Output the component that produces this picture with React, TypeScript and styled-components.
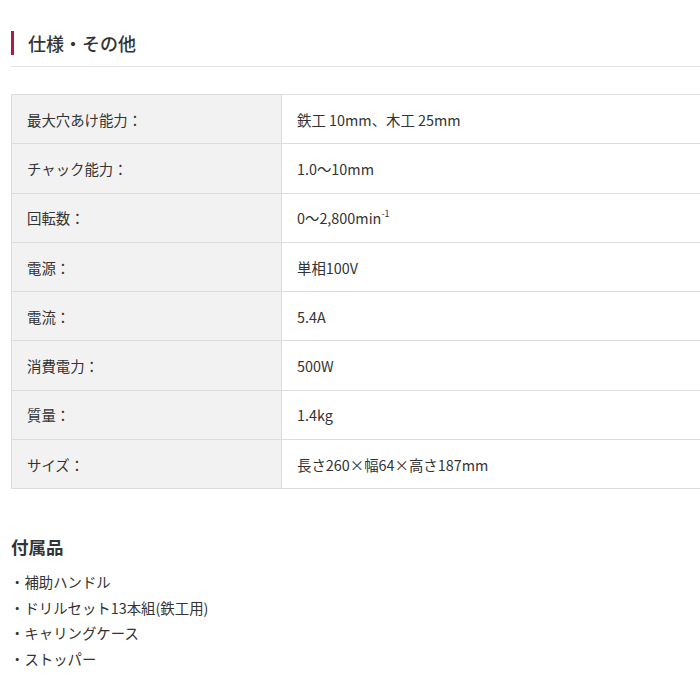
import styled, { createGlobalStyle } from "styled-components";

const GlobalStyle = createGlobalStyle`
  body {
    margin: 0;
    background: #fff;
    font-family: "Noto Sans CJK JP", "Noto Sans", sans-serif;
    color: #333;
  }
`;

const Page = styled.div`
  width: 700px;
  overflow: hidden;
  padding: 31px 0 0 11px;
  box-sizing: border-box;
`;

const SectionTitle = styled.h2`
  margin: 0;
  padding: 0 0 11px 0;
  border-bottom: 1px solid #e3e3e3;
  font-size: 18px;
  font-weight: 500;
  line-height: 24px;
  display: flex;
  align-items: center;
  gap: 14px;

  &::before {
    content: "";
    width: 3px;
    height: 24px;
    background: #b01a45;
  }
`;

const SpecTable = styled.table`
  margin-top: 27px;
  width: 720px;
  border-collapse: collapse;
  font-size: 14.4px;
`;

const Row = styled.tr``;

const Label = styled.th`
  width: 239px;
  background: #f2f2f2;
  border: 1px solid #dcdcdc;
  text-align: left;
  font-weight: 400;
  padding: 0 15px;
  height: 48.3px;
`;

const Value = styled.td`
  border: 1px solid #dcdcdc;
  padding: 0 15px;
  height: 48.3px;
`;

const Sup = styled.sup`
  font-size: 9px;
  vertical-align: 7px;
  line-height: 0;
`;

const SubTitle = styled.h3`
  margin: 46px 0 10px;
  font-size: 17.5px;
  font-weight: 700;
  line-height: 24px;
`;

const List = styled.ul`
  list-style: none;
  margin: 0;
  padding: 0;
  font-size: 14.4px;
  line-height: 25.5px;
`;

const Item = styled.li`
  margin-left: -1px;
`;

const specs: [string, React.ReactNode][] = [
  ["最大穴あけ能力：", "鉄工 10mm、木工 25mm"],
  ["チャック能力：", "1.0〜10mm"],
  [
    "回転数：",
    <>
      0〜2,800min<Sup>-1</Sup>
    </>,
  ],
  ["電源：", "単相100V"],
  ["電流：", "5.4A"],
  ["消費電力：", "500W"],
  ["質量：", "1.4kg"],
  ["サイズ：", "長さ260×幅64×高さ187mm"],
];

const accessories = ["補助ハンドル", "ドリルセット13本組(鉄工用)", "キャリングケース", "ストッパー"];

export default function App() {
  return (
    <Page>
      <GlobalStyle />
      <SectionTitle>仕様・その他</SectionTitle>
      <SpecTable>
        <tbody>
          {specs.map(([k, v]) => (
            <Row key={k}>
              <Label>{k}</Label>
              <Value>{v}</Value>
            </Row>
          ))}
        </tbody>
      </SpecTable>
      <SubTitle>付属品</SubTitle>
      <List>
        {accessories.map((a) => (
          <Item key={a}>・{a}</Item>
        ))}
      </List>
    </Page>
  );
}
